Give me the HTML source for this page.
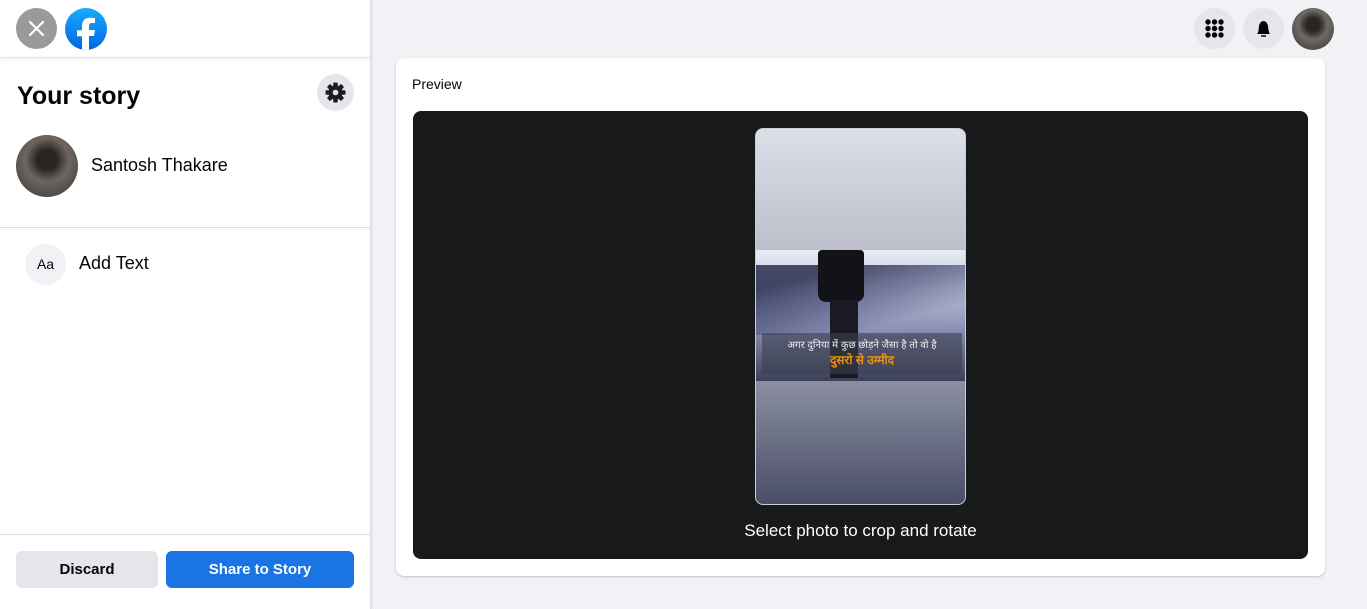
<!DOCTYPE html>
<html><head><meta charset="utf-8"><style>
*{box-sizing:border-box;margin:0;padding:0}
body{width:1367px;height:609px;overflow:hidden;background:#f0f2f5;font-family:"Liberation Sans",sans-serif;position:relative;color:#050505}
.left{position:absolute;left:0;top:0;width:371px;height:609px;background:#fff;border-right:1px solid #dadde1;box-shadow:1px 0 3px rgba(0,0,0,.08)}
.hdr{position:absolute;left:0;top:0;width:371px;height:58px;border-bottom:1px solid #e4e6eb;box-shadow:0 2px 3px rgba(0,0,0,.05)}
.circ{position:absolute;border-radius:50%}
.btn{position:absolute;top:551px;height:37px;border-radius:6px;font-size:15px;font-weight:bold;text-align:center;line-height:37px}
</style></head><body>
<div class="left">
 <div class="hdr">
  <div class="circ" style="left:16px;top:8px;width:41px;height:41px;background:#9a9a9a">
   <svg width="41" height="41"><path d="M14 14L27 27M27 14L14 27" stroke="#fff" stroke-width="2.2" stroke-linecap="round"/></svg>
  </div>
  <div class="circ" style="left:65px;top:8px;width:42px;height:42px;background:linear-gradient(#18acfe,#0165e1);overflow:hidden">
   <svg width="42" height="42"><path d="M24 42V28h5l1-6h-6v-4c0-2 1-3 3-3h3v-5c-1 0-3-.3-5-.3-5 0-8 3-8 8v4.6h-5v6h5V42z" fill="#fff"/></svg>
  </div>
 </div>
 <div style="position:absolute;left:17px;top:82px;font-size:25px;font-weight:bold">Your story</div>
 <div class="circ" style="left:317px;top:74px;width:37px;height:37px;background:#e4e6eb">
  <svg width="37" height="37" viewBox="0 0 37 37"><g transform="translate(18.5 18.5)" fill="#1c1e21"><circle r="7"/><g id="t"><rect x="-2.3" y="-10" width="4.6" height="4.6" rx="1"/></g><use href="#t" transform="rotate(45)"/><use href="#t" transform="rotate(90)"/><use href="#t" transform="rotate(135)"/><use href="#t" transform="rotate(180)"/><use href="#t" transform="rotate(225)"/><use href="#t" transform="rotate(270)"/><use href="#t" transform="rotate(315)"/><circle r="2.8" fill="#e4e6eb"/></g></svg>
 </div>
 <div class="circ" style="left:16px;top:135px;width:62px;height:62px;background:radial-gradient(circle at 50% 40%,#2a2422 20%,#6d6560 45%,#55504a 70%,#3e3a38)"></div>
 <div style="position:absolute;left:91px;top:155px;font-size:18px">Santosh Thakare</div>
 <div style="position:absolute;left:0;top:227px;width:371px;border-top:1px solid #dadde1"></div>
 <div class="circ" style="left:25px;top:244px;width:41px;height:41px;background:#f0f2f5;font-size:14px;text-align:center;line-height:41px">Aa</div>
 <div style="position:absolute;left:79px;top:253px;font-size:18px">Add Text</div>
 <div style="position:absolute;left:0;top:534px;width:371px;border-top:1px solid #dadde1;box-shadow:0 -1px 3px rgba(0,0,0,.05)"></div>
 <div class="btn" style="left:16px;width:142px;background:#e4e6eb;color:#050505">Discard</div>
 <div class="btn" style="left:166px;width:188px;background:#1b74e4;color:#fff">Share to Story</div>
</div>
<div class="circ" style="left:1194px;top:8px;width:41px;height:41px;background:#e4e6eb">
 <svg width="41" height="41"><g fill="#050505"><circle cx="14" cy="14" r="2.7"/><circle cx="20.5" cy="14" r="2.7"/><circle cx="27" cy="14" r="2.7"/><circle cx="14" cy="20.5" r="2.7"/><circle cx="20.5" cy="20.5" r="2.7"/><circle cx="27" cy="20.5" r="2.7"/><circle cx="14" cy="27" r="2.7"/><circle cx="20.5" cy="27" r="2.7"/><circle cx="27" cy="27" r="2.7"/></g></svg>
</div>
<div class="circ" style="left:1243px;top:8px;width:41px;height:41px;background:#e4e6eb">
 <svg width="41" height="41"><path d="M14 26c2-2 1.5-5 2-8s2.5-5 4.5-5 4 2 4.5 5 .5 6 2 8z" fill="#050505"/><path d="M18 28h5" stroke="#050505" stroke-width="1.5"/></svg>
</div>
<div class="circ" style="left:1292px;top:8px;width:42px;height:42px;background:radial-gradient(circle at 50% 40%,#2a2422 20%,#6d6a68 45%,#55504a 70%,#3e3a38)"></div>
<div style="position:absolute;left:396px;top:58px;width:929px;height:518px;background:#fff;border-radius:8px;box-shadow:0 1px 2px rgba(0,0,0,.2)">
 <div style="position:absolute;left:16px;top:18px;font-size:14px">Preview</div>
 <div style="position:absolute;left:17px;top:53px;width:895px;height:448px;background:#18191a;border-radius:8px">
  <div style="position:absolute;left:342px;top:17px;width:211px;height:377px;border:1px solid #ccc;border-radius:8px;overflow:hidden;background:linear-gradient(#dcdee8,#bcbecb 121px,#8a8fa0 253px,#4a4d68)">
   <div style="position:absolute;left:0;top:121px;width:211px;height:131px;background:linear-gradient(#e8ecf4,#c4c8dc 30%,#8a90b4 60%,#3c4058)">
    <div style="position:absolute;left:0;top:15px;width:211px;height:70px;background:linear-gradient(165deg,rgba(30,35,70,.8) 20%,rgba(70,78,120,.6) 50%,rgba(150,155,190,.3) 75%,transparent)"></div>
    <div style="position:absolute;left:62px;top:0;width:46px;height:52px;background:#121218;border-radius:4px 4px 8px 8px"></div>
    <div style="position:absolute;left:74px;top:50px;width:28px;height:78px;background:#1a1a22"></div>
    <div style="position:absolute;left:6px;top:83px;width:200px;height:41px;background:rgba(60,64,80,.6);text-align:center;font-family:'Liberation Sans','DejaVu Sans',sans-serif">
     <div style="font-size:10px;color:#eee;margin-top:4px;white-space:nowrap">अगर दुनिया में कुछ छोड़ने जैसा है तो वो है</div>
     <div style="font-size:12px;color:#e8920c;font-weight:bold">दुसरो से उम्मीद</div>
    </div>
   </div>
  </div>
  <div style="position:absolute;left:0;top:410px;width:895px;text-align:center;color:#fff;font-size:17px">Select photo to crop and rotate</div>
 </div>
</div>
</body></html>
